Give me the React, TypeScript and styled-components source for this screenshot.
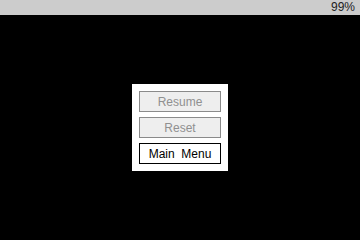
import React from 'react'
import styled, { createGlobalStyle } from 'styled-components'

const GlobalStyle = createGlobalStyle`
  html, body {
    margin: 0;
    padding: 0;
    background: #000;
  }
  body {
    font-family: 'Liberation Sans', Arial, sans-serif;
  }
`

const Screen = styled.div`
  width: 360px;
  height: 240px;
  display: flex;
  flex-direction: column;
  background: #000;
  overflow: hidden;
`

const StatusBar = styled.div`
  height: 15px;
  flex: none;
  display: flex;
  align-items: center;
  justify-content: flex-end;
  padding-right: 5px;
  background: #cccccc;
  color: #222;
  font-size: 12px;
  line-height: 15px;
`

const Stage = styled.div`
  flex: 1;
  display: flex;
  align-items: flex-start;
  justify-content: center;
  padding-top: 69px;
`

const Panel = styled.div`
  width: 82px;
  padding: 7px;
  background: #fff;
  display: flex;
  flex-direction: column;
  gap: 5px;
`

interface MenuButtonProps {
  disabled?: boolean
}

const MenuButton = styled.div<MenuButtonProps>`
  height: 21px;
  box-sizing: border-box;
  display: flex;
  align-items: center;
  justify-content: center;
  border: 1px solid ${(p) => (p.disabled ? '#8a8a8a' : '#000')};
  background: ${(p) => (p.disabled ? '#eeeeee' : '#fff')};
  color: ${(p) => (p.disabled ? '#909090' : '#000')};
  font-size: 12px;
  white-space: pre;
`

const App = () => (
  <>
    <GlobalStyle />
    <Screen>
      <StatusBar>99%</StatusBar>
      <Stage>
        <Panel>
          <MenuButton disabled>Resume</MenuButton>
          <MenuButton disabled>Reset</MenuButton>
          <MenuButton>{'Main  Menu'}</MenuButton>
        </Panel>
      </Stage>
    </Screen>
  </>
)

export default App
